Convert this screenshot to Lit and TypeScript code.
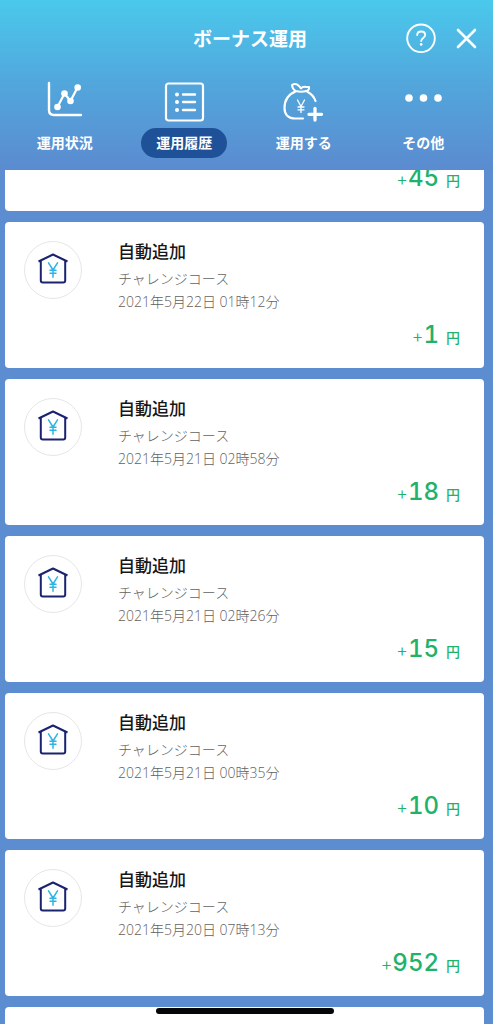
import { LitElement, html, css, svg, nothing } from "lit";
import { customElement, property, state } from "lit/decorators.js";
import { classMap } from "lit/directives/class-map.js";

interface Entry {
  title?: string;
  course?: string;
  date?: string;
  amount?: number;
}

const entry = (date: string, amount: number): Entry => ({
  title: "自動追加",
  course: "チャレンジコース",
  date,
  amount,
});

const ENTRIES: Entry[] = [
  { amount: 45 },
  entry("2021年5月22日 01時12分", 1),
  entry("2021年5月21日 02時58分", 18),
  entry("2021年5月21日 02時26分", 15),
  entry("2021年5月21日 00時35分", 10),
  entry("2021年5月20日 07時13分", 952),
  {},
];

const TABS = [
  {
    label: "運用状況",
    icon: svg`
      <path d="M5 4V31q0 5 5 5H37" stroke-width="2.4"/>
      <path d="M13.5 28L20.500 14.500L26.500 22L33.500 8.500" stroke-width="2.200"/>
      <g fill="currentColor" stroke="none">
        <circle cx="13.500" cy="28" r="3.300"/><circle cx="20.500" cy="14.500" r="3.300"/>
        <circle cx="26.500" cy="22" r="3.300"/><circle cx="33.700" cy="8.500" r="3.300"/>
      </g>`,
  },
  {
    label: "運用履歴",
    icon: svg`
      <rect x="2" y="4.500" width="37" height="37" rx="2.500" stroke-width="2.200"/>
      <path d="M19 15.500H31M19 23H31M19 31H31" stroke-width="2.400"/>
      <g fill="currentColor" stroke="none">
        <circle cx="13" cy="15.500" r="2"/><circle cx="13" cy="23" r="2"/><circle cx="13" cy="31" r="2"/>
      </g>`,
  },
  {
    label: "運用する",
    icon: svg`
      <path d="M12.500 12.500C5 15.500 1.500 22 1.500 29C1.500 36 6 39.500 12 39.500H20" stroke-width="2.200"/>
      <path d="M24 12.500C28 14.500 31 17.500 32.500 22" stroke-width="2.200"/>
      <path d="M12.500 12C10 10 9 8 9 6C12 4 15 5 18 9.500C20 6.500 23 8.500 26 8C26.500 10 25.500 11.500 23.500 12C20 13 16 13 12.500 12Z" stroke-width="2"/>
      <path d="M14.500 21L18 27.500L21.500 21M18 27.500V33.500M15 28H21M15 30.800H21" stroke-width="1.300"/>
      <path d="M32 29.500V41M26 35.300H38.500" stroke-width="3.300"/>`,
  },
  {
    label: "その他",
    icon: svg`
      <g fill="currentColor" stroke="none">
        <circle cx="6" cy="19" r="3.800"/><circle cx="20.500" cy="19" r="3.800"/><circle cx="35" cy="19" r="3.800"/>
      </g>`,
  },
];

@customElement("history-card")
class HistoryCard extends LitElement {
  @property({ attribute: false }) entry!: Entry;

  static styles = css`
    :host {
      display: block;
      font-variant-numeric: tabular-nums;
    }
    .card {
      box-sizing: border-box;
      display: grid;
      grid-template-columns: 58px 1fr;
      grid-template-rows: 1fr auto;
      column-gap: 36px;
      min-height: 146px;
      padding: 17px 24px 14px 19px;
      border-radius: 4px;
      background: #fff;
    }
    .badge {
      box-sizing: border-box;
      width: 58px;
      height: 58px;
      margin-top: 2px;
      border: 1px solid #e6e6e8;
      border-radius: 50%;
    }
    .badge svg {
      display: block;
      width: 56px;
      height: 56px;
    }
    .title {
      margin: 0;
      font-size: 17px;
      line-height: 26px;
      font-weight: 500;
      color: #161616;
    }
    .line {
      margin: 0;
      font-family: "Open Sans", "Noto Sans CJK JP", sans-serif;
      font-size: 14px;
      line-height: 23px;
      font-weight: 300;
      color: #626262;
    }
    .title + .line {
      margin-top: 2px;
    }
    .amount {
      grid-column: 1 / -1;
      grid-row: 2;
      display: flex;
      justify-content: flex-end;
      align-items: baseline;
      margin: 0;
      line-height: 32px;
      color: #1fb26b;
    }
    .sign {
      font-size: 18px;
      font-weight: 300;
    }
    .value {
      font-size: 24px;
      font-weight: 500;
    }
    .unit {
      margin-left: 7px;
      font-size: 14px;
      font-weight: 500;
    }
  `;

  private renderDetails() {
    const { title, course, date } = this.entry;
    return html`
      <div class="badge">
        <svg viewBox="0 0 56 56" fill="none" stroke-linecap="round" stroke-linejoin="round" aria-hidden="true">
          <g stroke="#1a2370" stroke-width="2">
            <path d="M13.500 19.500L28 12.500L42.500 19.500" stroke-linecap="butt" />
            <path d="M15.800 19V38.500q0 2 2 2H38.200q2 0 2-2V19" />
          </g>
          <path
            d="M23.500 20.800L28 28L32.500 20.800M28 28V35.200M25 28.300H31M25 31.200H31"
            stroke="#2db4e4"
            stroke-width="1.500"
          />
        </svg>
      </div>
      <div>
        <h2 class="title">${title}</h2>
        <p class="line">${course}</p>
        <p class="line">${date}</p>
      </div>
    `;
  }

  render() {
    const { title, amount } = this.entry;
    return html`
      <article class="card">
        ${title ? this.renderDetails() : nothing}
        ${amount === undefined
          ? nothing
          : html`<p class="amount">
              <span class="sign">+</span><span class="value">${amount}</span><span class="unit">円</span>
            </p>`}
      </article>
    `;
  }
}

@customElement("app-root")
class AppRoot extends LitElement {
  @state() private active = 1;

  static styles = css`
    :host {
      position: relative;
      display: flex;
      flex-direction: column;
      height: 100vh;
      margin-right: 1px;
      overflow: hidden;
      background: #5b8dd0;
      font-family: "Inter", "Noto Sans CJK JP", sans-serif;
    }
    button {
      padding: 0;
      border: 0;
      background: none;
      color: inherit;
      font: inherit;
      cursor: pointer;
    }
    .top {
      flex: none;
      background: linear-gradient(#4ac9ec, #52a6dc 50%, #5b8bd0);
      color: #fff;
    }
    .bar {
      display: grid;
      grid-template-columns: 1fr auto 1fr;
      align-items: center;
      height: 76px;
      padding: 0 14px 0 21px;
    }
    .heading {
      grid-column: 2;
      margin: 0;
      padding-top: 3px;
      font-size: 19px;
      line-height: 28px;
      font-weight: 700;
    }
    .actions {
      display: flex;
      justify-content: flex-end;
      gap: 18px;
    }
    .action {
      display: block;
    }
    .action svg,
    .tab svg {
      display: block;
    }
    .tabs {
      display: grid;
      grid-template-columns: repeat(4, 1fr);
      height: 94px;
      padding: 0 10px 0 5px;
    }
    .tab {
      display: flex;
      flex-direction: column;
      align-items: center;
      padding-top: 3px;
    }
    .tab svg {
      width: 41px;
      height: 44px;
    }
    .label {
      margin-top: 5px;
      padding: 0 15px;
      border-radius: 15px;
      font-size: 14px;
      line-height: 30px;
      font-weight: 700;
    }
    .selected .label {
      background: #1e5197;
    }
    .scroller {
      flex: 1;
      min-height: 0;
      overflow-y: auto;
      scrollbar-width: none;
    }
    .list {
      display: flex;
      flex-direction: column;
      gap: 11px;
      margin: 0;
      padding: 0 9px 11px 5px;
      list-style: none;
    }
    .indicator {
      position: absolute;
      bottom: 10px;
      left: 50%;
      width: 178px;
      height: 6px;
      margin-left: -91px;
      border-radius: 3px;
      background: #050608;
    }
  `;

  async firstUpdated() {
    const cards = Array.from(this.renderRoot.querySelectorAll("history-card")) as HistoryCard[];
    await Promise.all(cards.map((card) => card.updateComplete));
    // Open the list with only the foot of the newest entry in view.
    this.renderRoot.querySelector(".scroller")!.scrollTop = 105;
  }

  render() {
    return html`
      <header class="top">
        <div class="bar">
          <h1 class="heading">ボーナス運用</h1>
          <div class="actions">
            <button class="action" type="button" aria-label="ヘルプ">
              <svg width="32" height="32" viewBox="0 0 32 32" fill="none" stroke="currentColor" stroke-linecap="round" stroke-linejoin="round">
                <circle cx="16" cy="16.300" r="13.800" stroke-width="1.900" />
                <path d="M12.200 13C12.200 10.500 13.800 9.500 16.200 9.500C18.600 9.500 20.200 11 20.200 13C20.200 15.900 16.200 16.100 16.200 19" stroke-width="1.800" />
                <circle cx="16.200" cy="22.400" r="1.300" fill="currentColor" stroke="none" />
              </svg>
            </button>
            <button class="action" type="button" aria-label="閉じる">
              <svg width="24" height="32" viewBox="0 0 24 32" fill="none" stroke="currentColor" stroke-width="2.600" stroke-linecap="round">
                <path d="M3 8L20 25M20 8L3 25" />
              </svg>
            </button>
          </div>
        </div>
        <nav class="tabs">
          ${TABS.map(
            (tab, i) => html`
              <button
                type="button"
                class=${classMap({ tab: true, selected: i === this.active })}
                aria-pressed=${i === this.active}
                @click=${() => (this.active = i)}
              >
                <svg viewBox="0 0 41 44" fill="none" stroke="currentColor" stroke-linecap="round" stroke-linejoin="round" aria-hidden="true">
                  ${tab.icon}
                </svg>
                <span class="label">${tab.label}</span>
              </button>
            `
          )}
        </nav>
      </header>
      <main class="scroller">
        <ul class="list">
          ${ENTRIES.map((item) => html`<li><history-card .entry=${item}></history-card></li>`)}
        </ul>
      </main>
      <div class="indicator"></div>
    `;
  }
}
